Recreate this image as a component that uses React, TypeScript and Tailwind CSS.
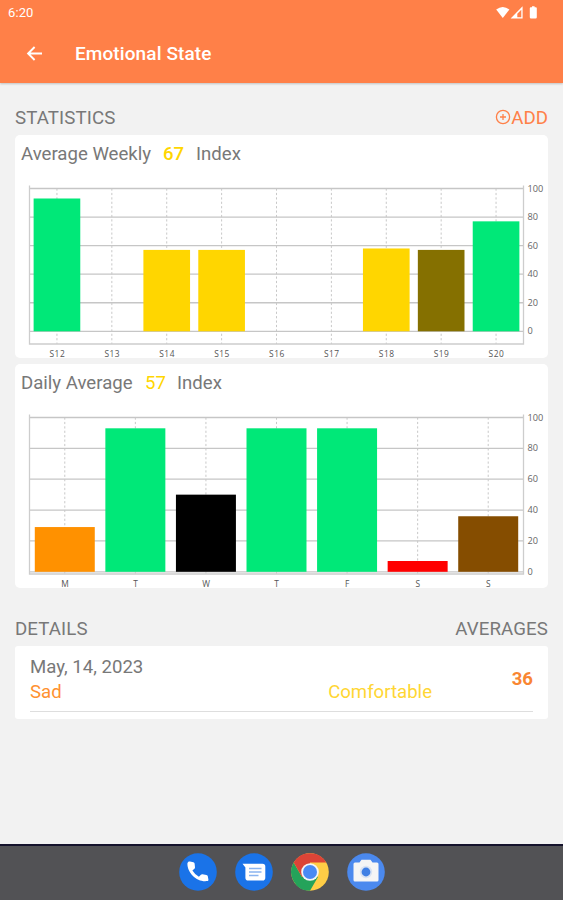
import type { ReactNode } from "react";

type Bar = {
  label: string;
  value: number;
  color: string;
};

const weekly: Bar[] = [
  { label: "S12", value: 93, color: "#00e878" },
  { label: "S13", value: 0, color: "#00e878" },
  { label: "S14", value: 57, color: "#ffd600" },
  { label: "S15", value: 57, color: "#ffd600" },
  { label: "S16", value: 0, color: "#00e878" },
  { label: "S17", value: 0, color: "#00e878" },
  { label: "S18", value: 58, color: "#ffd600" },
  { label: "S19", value: 57, color: "#857000" },
  { label: "S20", value: 77, color: "#00e878" },
];

const daily: Bar[] = [
  { label: "M", value: 29, color: "#ff9100" },
  { label: "T", value: 93, color: "#00e878" },
  { label: "W", value: 50, color: "#000000" },
  { label: "T", value: 93, color: "#00e878" },
  { label: "F", value: 93, color: "#00e878" },
  { label: "S", value: 7, color: "#ff0000" },
  { label: "S", value: 36, color: "#854d00" },
];

const ticks = [100, 80, 60, 40, 20, 0];

type BarChartProps = {
  bars: Bar[];
  height: number;
  top: number;
  zero: number;
  bottom: number;
};

const LEFT = 14.5;
const RIGHT = 508.5;

function BarChart({ bars, height, top, zero, bottom }: BarChartProps) {
  const step = (RIGHT - LEFT) / bars.length;
  const barWidth = step * 0.85;
  const y = (value: number) => zero - ((zero - top) * value) / 100;

  return (
    <svg
      width="533"
      height={height}
      viewBox={`0 0 533 ${height}`}
      className="block overflow-visible font-['Open_Sans','Noto_Sans',sans-serif]"
    >
      {ticks.map((t) => (
        <g key={t}>
          <line
            x1={LEFT}
            x2={RIGHT}
            y1={y(t)}
            y2={y(t)}
            stroke="#c6c6c6"
            strokeWidth="1.3"
          />
          <text x={RIGHT + 4} y={y(t) + 3} fontSize="9.2" fill="#666">
            {t}
          </text>
        </g>
      ))}
      {bars.map((bar, i) => {
        const cx = LEFT + step * (i + 0.5);
        return (
          <g key={i}>
            <line
              x1={cx}
              x2={cx}
              y1={top}
              y2={bottom}
              stroke="#c8c8c8"
              strokeDasharray="2.2 2.2"
            />
            {bar.value > 0 && (
              <rect
                x={cx - barWidth / 2}
                y={y(bar.value)}
                width={barWidth}
                height={zero - y(bar.value)}
                fill={bar.color}
              />
            )}
            <text
              x={cx + 0.4}
              y={bottom + 12.5}
              fontSize="8.4"
              letterSpacing="0.5"
              textAnchor="middle"
              fill="#555"
            >
              {bar.label}
            </text>
          </g>
        );
      })}
      <path
        d={`M${LEFT} ${top - 3}V${bottom}H${RIGHT}V${top - 3}`}
        fill="none"
        stroke="#cdcdcd"
        strokeWidth="1.3"
      />
    </svg>
  );
}

function StatusIcons() {
  return (
    <svg width="44" height="14" viewBox="0 0 44 14" fill="#fff">
      <path d="M.2 3.600Q6.700-1.600 13.400 3.600L6.800 12z" />
      <path
        fillRule="evenodd"
        d="M26.600.3V12.500H14.600zM25.300 3.800L21.300 7.800V11.200H25.300z"
      />
      <path d="M34.800 1.200h1.200V.2h2.600v1h1.200q1 0 1 1v9q0 1.200-1.200 1.200h-4.600q-1.200 0-1.200-1.200v-9q0-1 1-1z" />
    </svg>
  );
}

function DockIcon({ children }: { children: ReactNode }) {
  return (
    <svg width="38" height="38" viewBox="0 0 38 38">
      {children}
    </svg>
  );
}

function Dock() {
  return (
    <footer className="flex h-[56px] items-center justify-center gap-[18px] border-t-2 border-[#15132c] bg-[#525255] pb-0.5">
      <DockIcon>
        <circle cx="19" cy="19" r="18.800" fill="#1a73e8" />
        <path
          d="M9.200 8.900c.5-.5 1.100-.6 1.800-.4l3.400.8c.7.200 1.100.6 1.200 1.300l.4 3.600c0 .7-.2 1.200-.6 1.600l-2 1.800a17 17 0 0 0 6.500 6.200l2-2c.4-.4.9-.6 1.600-.5l3.900.6c.8.100 1.300.6 1.400 1.300l.6 3.200c.1.900-.3 1.600-1.200 1.700C18.300 29.500 8.200 20.200 8.400 10.500c0-.6.300-1.100.8-1.600z"
          fill="#fff"
        />
      </DockIcon>
      <DockIcon>
        <circle cx="19" cy="19" r="18.800" fill="#1a73e8" />
        <path
          d="M7.500 10.800H27.500q2.800 0 2.800 2.800V24.800q0 2.800-2.800 2.800H13.200q-2.800 0-2.800-2.800V14.500z"
          fill="#fff"
        />
        <path
          d="M14 15.500H26.500M14 19H26.500M14 22.500H23.500"
          stroke="#8ab4f0"
          strokeWidth="1.600"
        />
      </DockIcon>
      <DockIcon>
        <circle cx="19" cy="19" r="18.800" fill="#ffcd46" />
        <path
          d="M2.700 9.600A18.800 18.800 0 0 0 19 37.800L27.100 23.700H10.900z"
          fill="#24a35a"
        />
        <path
          d="M2.700 9.600A18.800 18.800 0 0 1 35.300 9.600H19V19L10.900 23.700z"
          fill="#dc4437"
        />
        <circle cx="19" cy="19" r="8.800" fill="#f5f5f5" />
        <circle cx="19" cy="19" r="7" fill="#4a8af4" />
      </DockIcon>
      <DockIcon>
        <circle cx="19" cy="19" r="18.800" fill="#4b89ee" />
        <path
          d="M8 9.500h4.500l2-2.800h9l2 2.800H30q1.500 0 1.500 1.500v16q0 1.500-1.500 1.500H8q-1.500 0-1.500-1.500V11q0-1.500 1.500-1.500z"
          fill="#f5f5f5"
        />
        <circle cx="19" cy="19" r="6.200" fill="#d9e3f3" />
        <circle cx="19" cy="19" r="4.400" fill="#3f7fe4" />
      </DockIcon>
    </footer>
  );
}

export default function App() {
  return (
    <div className="flex h-[900px] w-[563px] flex-col overflow-hidden bg-[#f2f2f2] font-['Roboto',sans-serif] text-[#787878]">
      {/* Status bar and app bar */}
      <header className="h-[83px] shrink-0 bg-[#ff8048] text-white shadow-[0_1px_2px_rgba(0,0,0,0.2)]">
        <div className="flex h-[25px] items-center justify-between pr-[23px] pl-2">
          <span className="text-[13px] tracking-[0.1px]">6:20</span>
          <StatusIcons />
        </div>
        <div className="flex h-[57px] items-center pl-[26px]">
          <svg width="17" height="16" viewBox="0 0 17 16" fill="none" stroke="#fff" strokeWidth="1.900">
            <path d="M16 7.500H2M8.600 1L2.100 7.500L8.600 14" />
          </svg>
          <h1 className="ml-8 pt-0.5 text-[19px] font-medium tracking-[0.1px]">Emotional State</h1>
        </div>
      </header>

      <main className="flex-1 px-[15px]">
        <div className="flex h-[52px] items-end justify-between pb-[3px] text-[18.700px] leading-[27px]">
          <h2 className="tracking-[0.1px]">STATISTICS</h2>
          <button className="flex items-center text-[#ff8048]">
            <svg width="16" height="16" viewBox="0 0 16 16" className="mb-[3px]" fill="none" stroke="currentColor" strokeWidth="1.300">
              <circle cx="8" cy="8" r="6.600" />
              <path d="M8 5V11M5 8H11" />
            </svg>
            ADD
          </button>
        </div>

        <section className="h-[223px] rounded-[5px] bg-white">
          <div className="flex h-[38px] items-center pt-px pl-1.5 text-[18.600px] leading-[27px]">
            <span className="w-[142px]">Average Weekly</span>
            <span className="w-[33px] font-medium text-[#ffd600]">67</span>
            <span>Index</span>
          </div>
          <BarChart bars={weekly} height={185} top={15.5} zero={158.3} bottom={171} />
        </section>

        <section className="mt-[6px] h-[224px] rounded-[5px] bg-white">
          <div className="flex h-[38px] items-center pt-px pl-1.5 text-[18.600px] leading-[27px]">
            <span className="w-[124px]">Daily Average</span>
            <span className="w-[32px] text-[#ffd600]">57</span>
            <span>Index</span>
          </div>
          <BarChart bars={daily} height={186} top={15.5} zero={169.800} bottom={172} />
        </section>

        <div className="flex h-[58px] items-end justify-between pb-[3px] text-[18.700px] leading-[27px] tracking-[0.1px]">
          <h2>DETAILS</h2>
          <h2>AVERAGES</h2>
        </div>

        <section className="h-[73px] rounded-[3px] bg-white px-[15px] pt-2">
          <div className="flex h-[58px] items-center justify-between border-b border-[#dedede] pb-[5px]">
            <div className="w-[402px] text-[18.600px] leading-[25px]">
              <div>May, 14, 2023</div>
              <div className="flex justify-between">
                <span className="text-[#ff9130]">Sad</span>
                <span className="text-[#ffd633]">Comfortable</span>
              </div>
            </div>
            <span className="text-[18.600px] font-bold text-[#f98632]">36</span>
          </div>
        </section>
      </main>

      <Dock />
    </div>
  );
}
